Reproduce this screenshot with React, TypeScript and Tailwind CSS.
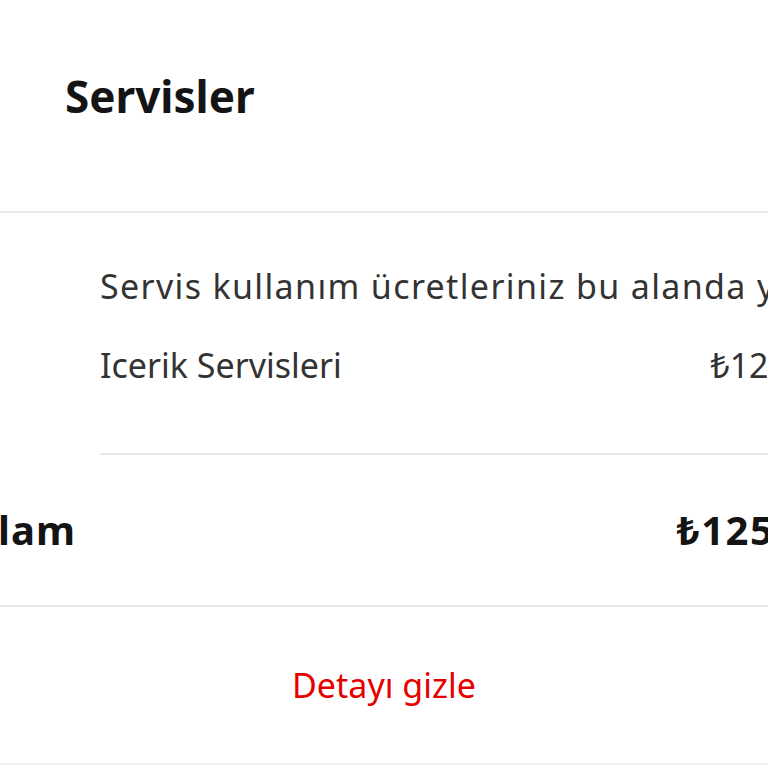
export default function App() {
  return (
    <div className="w-[768px] h-[768px] overflow-hidden bg-white text-[#333333]" style={{ fontFamily: '"Noto Sans", "DejaVu Sans", sans-serif' }}>
      <div className="w-[836px]">
        <div className="h-[211px] pt-[72px] pl-[65px]">
          <h1 className="text-[44px] leading-[48px] font-bold text-[#141414]">Servisler</h1>
        </div>
        <div className="h-[2px] bg-[#e8e8e8]" />

        <div className="pl-[100px]">
          <p className="pt-[53px] text-[34px] leading-[40px] tracking-[1.35px] whitespace-nowrap">
            Servis kullanım ücretleriniz bu alanda yer almaktadır.
          </p>
          <div className="flex justify-between pt-[39px] pb-[68px] text-[34px] leading-[40px]">
            <span>Icerik Servisleri</span>
            <span>₺125,00</span>
          </div>
          <div className="h-[2px] bg-[#e8e8e8]" />
        </div>

        <div className="h-[150px] flex items-center justify-between text-[40px] leading-[44px] font-bold text-[#141414]">
          <div className="w-[76px] flex justify-end shrink-0">
            <span className="whitespace-nowrap tracking-[1px]">Toplam</span>
          </div>
          <span className="tracking-[1.5px]">₺125,00</span>
        </div>
        <div className="h-[2px] bg-[#e8e8e8]" />
      </div>

      <div className="h-[156px] flex items-center justify-center">
        <button className="text-[34px] leading-[40px] text-[#e60000]">Detayı gizle</button>
      </div>
      <div className="h-[2px] bg-[#f0f0f0]" />
    </div>
  );
}
